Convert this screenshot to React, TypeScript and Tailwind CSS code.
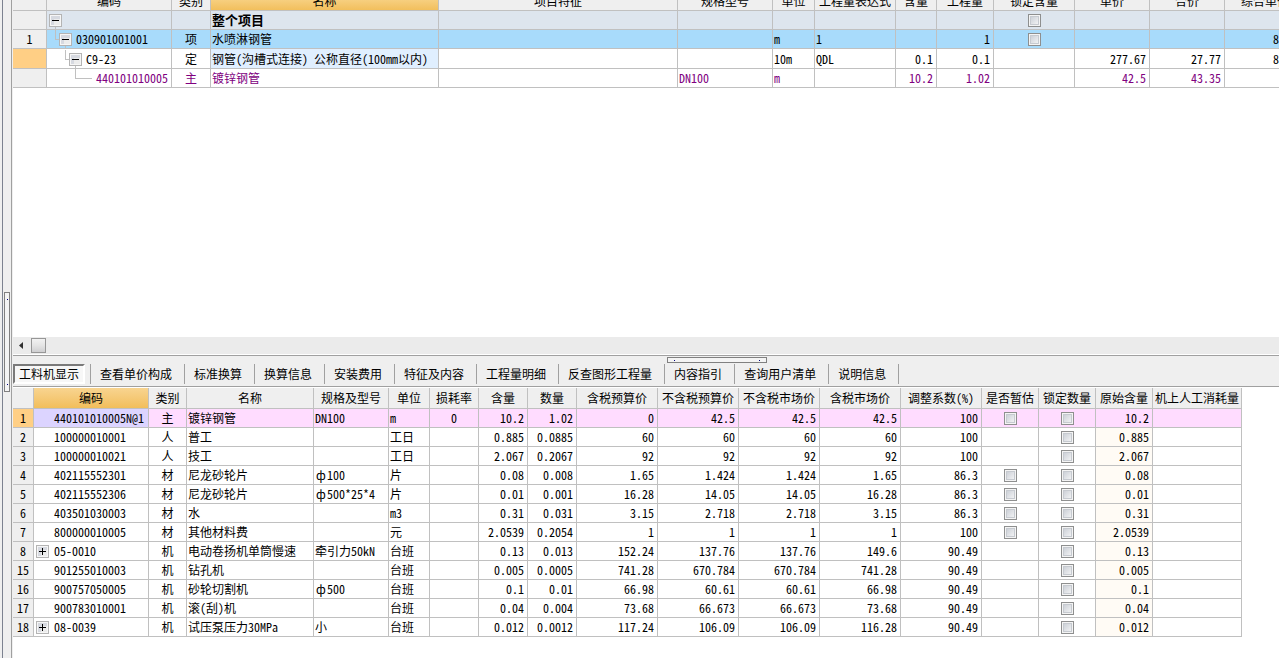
import { type ReactNode } from 'react'

type Align = 'left' | 'center' | 'right'

interface Column {
  title: string
  width: string
  align: Align
}

const ALIGN: Record<Align, string> = {
  left: 'text-left pl-px',
  center: 'text-center',
  right: 'text-right pr-[3px]',
}

const BUDGET_COLUMNS: Column[] = [
  { title: '编码', width: 'w-[125px]', align: 'left' },
  { title: '类别', width: 'w-[39px]', align: 'center' },
  { title: '名称', width: 'w-[228px]', align: 'left' },
  { title: '项目特征', width: 'w-[239px]', align: 'left' },
  { title: '规格型号', width: 'w-[95px]', align: 'left' },
  { title: '单位', width: 'w-[42px]', align: 'left' },
  { title: '工程量表达式', width: 'w-[81px]', align: 'left' },
  { title: '含量', width: 'w-[41px]', align: 'right' },
  { title: '工程量', width: 'w-[57px]', align: 'right' },
  { title: '锁定含量', width: 'w-[81px]', align: 'center' },
  { title: '单价', width: 'w-[75px]', align: 'right' },
  { title: '合价', width: 'w-[75px]', align: 'right' },
]

interface BudgetRow {
  no: string
  code: string
  depth: number
  leaf?: boolean
  locked?: boolean
  cells: string[]
  price: string
  row: string
  head: string
  name: string
}

// cells follow BUDGET_COLUMNS, without the code column
const BUDGET_ROWS: BudgetRow[] = [
  {
    no: '', code: '', depth: 0, locked: true, price: '',
    cells: ['', '整个项目', '', '', '', '', '', '', '', '', ''],
    row: 'h-[19px] bg-[#dde5ee]', head: 'bg-[#efefef]', name: 'font-bold text-[13px]',
  },
  {
    no: '1', code: '030901001001', depth: 1, locked: true, price: '8',
    cells: ['项', '水喷淋钢管', '', '', 'm', '1', '', '1', '', '', ''],
    row: 'h-[19px] bg-[#a8dbfb]', head: 'bg-[#efefef]', name: '',
  },
  {
    no: '', code: 'C9-23', depth: 2, price: '8',
    cells: ['定', '钢管(沟槽式连接) 公称直径(100mm以内)', '', '', '10m', 'QDL', '0.1', '0.1', '', '277.67', '27.77'],
    row: 'h-5 bg-white', head: 'bg-[#ffcf85]', name: 'bg-[#e0efff]',
  },
  {
    no: '', code: '440101010005', depth: 3, leaf: true, price: '',
    cells: ['主', '镀锌钢管', '', 'DN100', 'm', '', '10.2', '1.02', '', '42.5', '43.35'],
    row: 'h-[19px] bg-white text-[#800080]', head: 'bg-[#efefef]', name: '',
  },
]

const TABS = [
  '查看单价构成', '标准换算', '换算信息', '安装费用', '特征及内容',
  '工程量明细', '反查图形工程量', '内容指引', '查询用户清单', '说明信息',
]

const MATERIAL_COLUMNS: Column[] = [
  { title: '编码', width: 'w-[115px]', align: 'left' },
  { title: '类别', width: 'w-[38px]', align: 'center' },
  { title: '名称', width: 'w-[127px]', align: 'left' },
  { title: '规格及型号', width: 'w-[75px]', align: 'left' },
  { title: '单位', width: 'w-[41px]', align: 'left' },
  { title: '损耗率', width: 'w-[49px]', align: 'center' },
  { title: '含量', width: 'w-[49px]', align: 'right' },
  { title: '数量', width: 'w-[49px]', align: 'right' },
  { title: '含税预算价', width: 'w-[81px]', align: 'right' },
  { title: '不含税预算价', width: 'w-[81px]', align: 'right' },
  { title: '不含税市场价', width: 'w-[81px]', align: 'right' },
  { title: '含税市场价', width: 'w-[81px]', align: 'right' },
  { title: '调整系数(%)', width: 'w-[81px]', align: 'right' },
  { title: '是否暂估', width: 'w-[57px]', align: 'center' },
  { title: '锁定数量', width: 'w-[57px]', align: 'center' },
  { title: '原始含量', width: 'w-[57px]', align: 'right' },
  { title: '机上人工消耗量', width: 'w-[89px]', align: 'right' },
]

interface MaterialRow {
  no: string
  code: string
  group?: boolean
  provisional?: boolean
  /** 类别 … 调整系数, in column order */
  cells: string[]
}

const MATERIAL_ROWS: MaterialRow[] = [
  { no: '1', code: '440101010005N@1', provisional: true, cells: ['主', '镀锌钢管', 'DN100', 'm', '0', '10.2', '1.02', '0', '42.5', '42.5', '42.5', '100'] },
  { no: '2', code: '100000010001', cells: ['人', '普工', '', '工日', '', '0.885', '0.0885', '60', '60', '60', '60', '100'] },
  { no: '3', code: '100000010021', cells: ['人', '技工', '', '工日', '', '2.067', '0.2067', '92', '92', '92', '92', '100'] },
  { no: '4', code: '402115552301', provisional: true, cells: ['材', '尼龙砂轮片', 'ф100', '片', '', '0.08', '0.008', '1.65', '1.424', '1.424', '1.65', '86.3'] },
  { no: '5', code: '402115552306', provisional: true, cells: ['材', '尼龙砂轮片', 'ф500*25*4', '片', '', '0.01', '0.001', '16.28', '14.05', '14.05', '16.28', '86.3'] },
  { no: '6', code: '403501030003', provisional: true, cells: ['材', '水', '', 'm3', '', '0.31', '0.031', '3.15', '2.718', '2.718', '3.15', '86.3'] },
  { no: '7', code: '800000010005', provisional: true, cells: ['材', '其他材料费', '', '元', '', '2.0539', '0.2054', '1', '1', '1', '1', '100'] },
  { no: '8', code: '05-0010', group: true, cells: ['机', '电动卷扬机单筒慢速', '牵引力50kN', '台班', '', '0.13', '0.013', '152.24', '137.76', '137.76', '149.6', '90.49'] },
  { no: '15', code: '901255010003', cells: ['机', '钻孔机', '', '台班', '', '0.005', '0.0005', '741.28', '670.784', '670.784', '741.28', '90.49'] },
  { no: '16', code: '900757050005', cells: ['机', '砂轮切割机', 'ф500', '台班', '', '0.1', '0.01', '66.98', '60.61', '60.61', '66.98', '90.49'] },
  { no: '17', code: '900783010001', cells: ['机', '滚(刮)机', '', '台班', '', '0.04', '0.004', '73.68', '66.673', '66.673', '73.68', '90.49'] },
  { no: '18', code: '08-0039', group: true, cells: ['机', '试压泵压力30MPa', '小', '台班', '', '0.012', '0.0012', '117.24', '106.09', '106.09', '116.28', '90.49'] },
]

// the diameter sign takes a full-width slot
function Spec({ text }: { text: string }) {
  if (!text.startsWith('ф')) return <>{text}</>
  return (
    <>
      <span className="inline-block w-3 text-center">ф</span>
      {text.slice(1)}
    </>
  )
}

function Toggle({ open, tail }: { open: boolean; tail?: boolean }) {
  return (
    <button type="button" aria-expanded={open} aria-label={open ? '收起' : '展开'} className="block shrink-0">
      <svg width="13" height="18" shapeRendering="crispEdges" className="block">
        <rect x="0.5" y="3.5" width="12" height="12" fill="#f6f6f6" stroke="#b4b4b4" />
        <rect x="2" y="5" width="9" height="9" fill="#d6d9e0" />
        <rect x="5" y="8" width="6" height="6" fill="#ececec" />
        <rect x="3" y="9" width="7" height="1" fill="#000" />
        {!open && <rect x="6" y="6" width="1" height="7" fill="#000" />}
        {tail && <rect x="6" y="16" width="1" height="2" fill="#c0c0c0" />}
      </svg>
    </button>
  )
}

function Branch({ depth, leaf }: { depth: number; leaf?: boolean }) {
  const width = leaf ? 19 + depth * 10 : 2 + depth * 10
  const x = depth * 10 - 2
  const end = leaf ? x + 17 : width
  return (
    <svg width={width} height="18" shapeRendering="crispEdges" className="block shrink-0">
      {depth > 0 && (
        <>
          <rect x={x} y="0" width="1" height="10" fill="#c0c0c0" />
          <rect x={x} y="9" width={end - x} height="1" fill="#c0c0c0" />
        </>
      )}
    </svg>
  )
}

function Check({ label }: { label: string }) {
  return (
    <input
      type="checkbox"
      aria-label={label}
      className="block mx-auto size-[13px] appearance-none border border-[#8e8f8f] bg-linear-to-br from-[#c3c8d0] to-[#fbfbfb] shadow-[inset_0_0_0_1px_#f4f4f4,inset_0_0_0_2px_#c6cad0] checked:bg-none checked:bg-[#4b6a9b]"
    />
  )
}

function Cell({ className = '', children }: { className?: string; children?: ReactNode }) {
  return (
    <td className={`border-r border-b border-[#c0c0c0] p-0 whitespace-nowrap overflow-hidden ${className}`}>
      {children}
    </td>
  )
}

function BudgetTable() {
  return (
    <table className="w-[1292px] table-fixed border-separate border-spacing-0">
      <thead>
        <tr>
          <th className="w-[34px] h-[11px] p-0 border-r border-b border-[#c0c0c0] bg-[#efefef]" />
          {BUDGET_COLUMNS.map((c) => (
            <th
              key={c.title}
              className={`${c.width} p-0 border-r border-b border-[#c0c0c0] font-normal ${c.title === '名称' ? 'bg-linear-to-b from-[#f7cf7f] to-[#f2bf5c]' : 'bg-[#efefef]'}`}
            >
              <div className="h-2.5 overflow-hidden flex items-end justify-center whitespace-nowrap">{c.title}</div>
            </th>
          ))}
          <th className="p-0 border-b border-[#c0c0c0] bg-[#efefef] font-normal">
            <div className="h-2.5 pl-4 overflow-hidden flex items-end whitespace-nowrap">综合单价</div>
          </th>
        </tr>
      </thead>
      <tbody>
        {BUDGET_ROWS.map((r, i) => (
          <tr key={i} className={r.row}>
            <Cell className={`text-center ${r.head}`}>{r.no}</Cell>
            <Cell>
              <div className="flex items-center">
                <Branch depth={r.depth} leaf={r.leaf} />
                {!r.leaf && <Toggle open tail />}
                <span className={r.leaf ? '' : 'pl-1'}>{r.code}</span>
              </div>
            </Cell>
            {r.cells.map((text, j) => {
              const col = BUDGET_COLUMNS[j + 1]
              return (
                <Cell key={col.title} className={`${ALIGN[col.align]} ${j === 1 ? r.name : ''}`}>
                  {col.title === '锁定含量' && r.locked ? <Check label={`${col.title} ${r.code}`} /> : text}
                </Cell>
              )
            })}
            <Cell className="pl-12">{r.price}</Cell>
          </tr>
        ))}
      </tbody>
    </table>
  )
}

function ScrollBar() {
  return (
    <div className="h-[17px] shrink-0 pt-px flex items-start bg-[#ebebeb]">
      <button type="button" aria-label="向左滚动" className="w-4 h-[15px] mr-0.5 flex items-center justify-center">
        <svg width="4" height="7" className="block">
          <path d="M4 0v7L0 3.5z" fill="#303030" />
        </svg>
      </button>
      <span className="w-[15px] h-[15px] border border-[#979797] bg-linear-to-b from-[#f2f2f2] via-[#e4e4e4] to-[#cfcfd1]" />
    </div>
  )
}

function TabBar() {
  return (
    <nav className="relative h-[31px] shrink-0 pt-[5px] flex items-center bg-[#efefef] border-b border-[#a0a0a0]">
      <button type="button" className="w-[72px] h-5 mr-[5px] shrink-0 flex items-center justify-center border-2 border-t-[#7a7a7a] border-l-[#7a7a7a] border-b-white border-r-white bg-[#f7f7f7] whitespace-nowrap">
        工料机显示
      </button>
      {TABS.map((t) => (
        <div key={t} className="flex items-center shrink-0">
          <span className="w-px h-5 bg-[#a0a0a0]" />
          <button type="button" className="pl-[9px] pr-3 whitespace-nowrap">{t}</button>
        </div>
      ))}
      <span className="w-px h-5 bg-[#a0a0a0]" />
      {/* horizontal splitter grip */}
      <span className="absolute left-[654px] top-px w-[100px] h-1.5 px-1.5 flex items-center justify-between border border-[#808080] bg-[#f4f4f4]">
        <i className="size-px bg-[#000080]" />
        <i className="size-px bg-[#000080]" />
      </span>
    </nav>
  )
}

function MaterialTable() {
  return (
    <table className="w-[1229px] table-fixed border-separate border-spacing-0">
      <thead>
        <tr className="h-[21px]">
          <th className="w-[21px] p-0 border-r border-b border-[#c0c0c0] bg-[#efefef]" />
          {MATERIAL_COLUMNS.map((c, i) => (
            <th
              key={c.title}
              className={`${c.width} p-0 border-r border-b border-[#c0c0c0] font-normal whitespace-nowrap ${i === 0 ? 'bg-linear-to-b from-[#f8d490] to-[#f2be5a]' : 'bg-[#efefef]'}`}
            >
              {c.title}
            </th>
          ))}
        </tr>
      </thead>
      <tbody>
        {MATERIAL_ROWS.map((r, i) => {
          const active = i === 0
          return (
            <tr key={r.no} className={`h-[19px] ${active ? 'bg-[#ffdcff]' : 'bg-white'}`}>
              <Cell className={`text-center ${active ? 'bg-[#ffcf85]' : 'bg-[#efefef]'}`}>{r.no}</Cell>
              <Cell className={active ? 'bg-[#dcd4ff]' : ''}>
                <div className="flex items-center pl-0.5">
                  {r.group ? <Toggle open={false} /> : <span className="w-[13px] h-[18px]" />}
                  <span className="pl-[5px]">{r.code}</span>
                </div>
              </Cell>
              {r.cells.map((text, j) => (
                <Cell key={j} className={ALIGN[MATERIAL_COLUMNS[j + 1].align]}>
                  <Spec text={text} />
                </Cell>
              ))}
              <Cell>{r.provisional && <Check label={`是否暂估 ${r.code}`} />}</Cell>
              <Cell><Check label={`锁定数量 ${r.code}`} /></Cell>
              <Cell className={`text-right pr-[3px] ${active ? '' : 'bg-[#fffbf5]'}`}>{r.cells[5]}</Cell>
              <Cell />
            </tr>
          )
        })}
      </tbody>
    </table>
  )
}

export default function App() {
  return (
    <div className="h-screen flex overflow-hidden bg-[#efefef] text-black text-[12px] leading-[18px] font-['Noto_Sans_CJK_SC',sans-serif] [font-feature-settings:'hwid']">
      <div className="w-3 shrink-0 flex items-center border-r border-[#a0a0a0]">
        <span className="w-0.5 h-full" />
        <span className="w-px h-full bg-[#7c8290]" />
        {/* vertical splitter grip */}
        <span className="w-1.5 h-[100px] ml-px mt-[26px] py-1.5 flex flex-col items-center justify-between border border-[#808080] bg-[#f4f4f4]">
          <i className="size-px bg-[#000080]" />
          <i className="size-px bg-[#000080]" />
        </span>
      </div>
      <main className="flex-1 min-w-0 flex flex-col pl-px">
        <section className="h-[337px] shrink-0 overflow-hidden bg-white">
          <BudgetTable />
        </section>
        <ScrollBar />
        <div className="h-0.5 shrink-0 bg-white border-b border-[#a0a0a0]" />
        <TabBar />
        <section className="flex-1 min-h-0 overflow-hidden bg-white pt-px">
          <MaterialTable />
        </section>
      </main>
    </div>
  )
}
